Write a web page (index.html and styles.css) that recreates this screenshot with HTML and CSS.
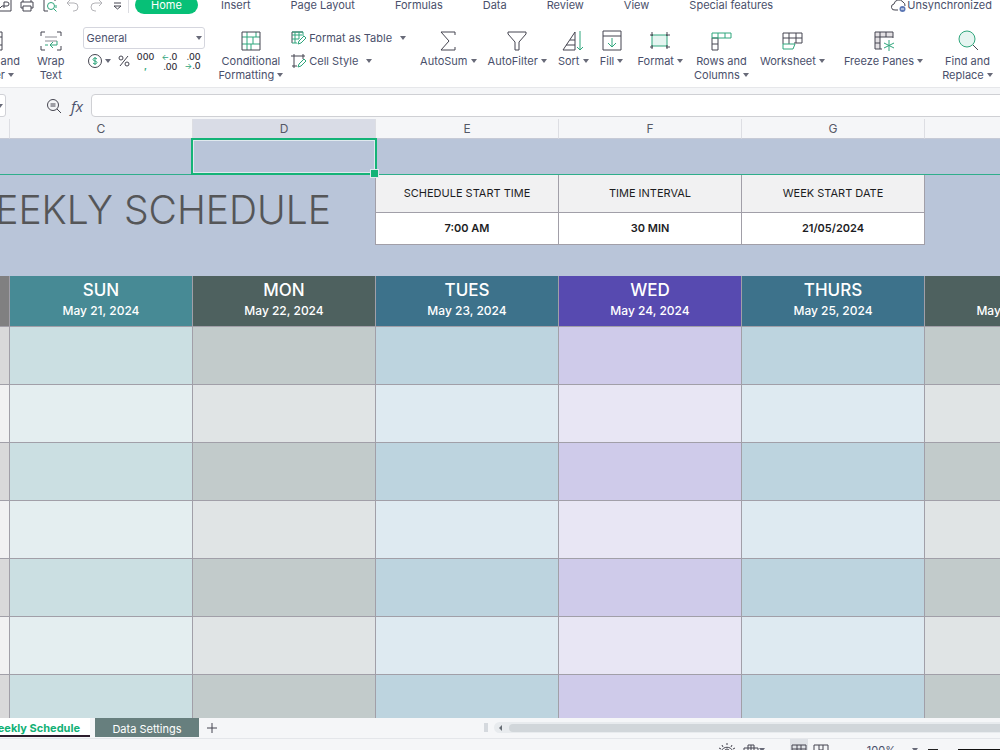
FILE: index.html
```html
<!DOCTYPE html>
<html lang="en">
<head>
  <meta charset="UTF-8">
  <title>Weekly Schedule</title>
  <link rel="stylesheet" href="styles.css">
</head>
<body>
  <div class="app">
    <header class="menubar">
      <div class="quick">
        <button aria-label="Export to PDF"><svg width="16" height="16" viewBox="0 0 16 16"><path d="M4 2h11v12H1V6" /><path d="M8 11V5h3a2 2 0 0 1 0 4H6M4 11l2-2"/></svg></button>
        <button aria-label="Print"><svg width="16" height="16" viewBox="0 0 16 16"><path d="M4 5V2h8v3M4 11H2V5h12v6h-2M4 9h8v5H4z"/></svg></button>
        <button aria-label="Print preview"><svg width="16" height="16" viewBox="0 0 16 16"><path d="M6 14H2V2h11v2"/><g class="green"><circle cx="9" cy="9" r="3.5"/><path d="M11.500 11.500l3 3M14 8v3"/></g></svg></button>
        <button aria-label="Undo" class="faded"><svg width="16" height="16" viewBox="0 0 16 16"><path d="M5 3L2 6l3 3M2 6h7a4 4 0 0 1 0 8H8"/></svg></button>
        <button aria-label="Redo" class="faded"><svg width="16" height="16" viewBox="0 0 16 16"><path d="M11 3l3 3-3 3M14 6H7a4 4 0 0 0 0 8h1"/></svg></button>
        <button aria-label="Customize"><svg width="16" height="16" viewBox="0 0 16 16"><path d="M3 6h7M3 9h7l-3.500 3z"/></svg></button>
      </div>
      <nav class="menus">
        <a href="#" class="menu-active">Home</a>
        <a href="#">Insert</a>
        <a href="#">Page Layout</a>
        <a href="#">Formulas</a>
        <a href="#">Data</a>
        <a href="#">Review</a>
        <a href="#">View</a>
        <a href="#">Special features</a>
      </nav>
      <button class="sync"><svg width="16" height="16" viewBox="0 0 16 16"><path d="M7 13H4a3 3 0 0 1-1-6 5 5 0 0 1 9-2 4 4 0 0 1 2 4"/><circle class="sync-dot" cx="11.500" cy="12" r="3"/><path class="sync-line" d="M10 12h3"/></svg>Unsynchronized</button>
    </header>

    <div class="ribbon">
      <button class="tool"><svg width="24" height="24" viewBox="0 0 24 24"><path d="M2 3h20v18H2zM2 8h20M12 3v5M2 16h20"/><path class="green" d="M5 12h14M16 10l3 2-3 2"/></svg><span>Merge and<br>Center <i class="arrow"></i></span></button>
      <button class="tool tool-wrap"><svg width="24" height="24" viewBox="0 0 24 24"><path d="M2 7V3h4M18 3h4v4M2 17v4h4M18 21h4v-4"/><path class="grey" d="M6 8h12M6 12h12"/><path class="green" d="M6 16h3M18 12v4h-6M14 13l-3 3 3 3"/></svg><span>Wrap<br>Text</span></button>

      <div class="number">
        <div class="select-wrap">
          <select aria-label="Number format"><option>General</option></select>
          <i class="arrow"></i>
        </div>
        <div class="number-tools">
          <button aria-label="Currency"><svg width="14" height="14" viewBox="0 0 14 14"><circle cx="7" cy="7" r="6.500"/><path class="green" d="M9 5c-1-1.500-4-1-4 .500C5 7.500 9 6.500 9 8.500c0 1.500-3 2-4 .500M7 3v8"/></svg><i class="arrow"></i></button>
          <button aria-label="Percent"><svg width="12" height="14" viewBox="0 0 12 14"><circle cx="3" cy="4" r="2"/><circle cx="9" cy="10" r="2"/><path d="M10 2L2 12"/></svg></button>
          <button class="digits">000<b>,</b></button>
          <button class="digits"><em>←</em>.0<br>.00</button>
          <button class="digits">.00<br><em>→</em>.0</button>
        </div>
      </div>

      <button class="tool tool-cond"><svg width="24" height="24" viewBox="0 0 24 24"><g class="green"><path d="M3 8h18M3 15h18M8 3v18M14 8v7M17 3v5M12 15v6"/></g><path d="M3 3v18M21 3v18M3 3h18M3 21h18"/></svg><span>Conditional<br>Formatting <i class="arrow"></i></span></button>

      <div class="styles">
        <button><svg width="16" height="16" viewBox="0 0 16 16"><path d="M1 13V2h11"/><path class="green" d="M1 2h11v4M1 13h5M1 5h10M1 9h7M4 2v11M8 2v7M7 14l1-3 5-5 2 2-5 5z"/></svg>Format as Table <i class="arrow"></i></button>
        <button><svg width="16" height="16" viewBox="0 0 16 16"><path d="M3 1v14M0 3h14M12 1v5M1 13h5"/><path class="green" d="M7 14l1-3 5-5 2 2-5 5z"/></svg>Cell Style <i class="arrow"></i></button>
      </div>

      <button class="tool"><svg width="24" height="24" viewBox="0 0 24 24"><path d="M19 6V3H5l8 9-8 9h14v-3"/></svg><span>AutoSum <i class="arrow"></i></span></button>
      <button class="tool"><svg width="24" height="24" viewBox="0 0 24 24"><path d="M3 3h18v2l-7 8v8h-4v-8L3 5z"/></svg><span>AutoFilter <i class="arrow"></i></span></button>
      <button class="tool"><svg width="24" height="24" viewBox="0 0 24 24"><path d="M2 21L14 3v18zM5 16h9M9 11h5"/><path class="green" d="M19 2v19M16 18l3 3 3-3"/></svg><span>Sort <i class="arrow"></i></span></button>
      <button class="tool tool-fill"><svg width="24" height="24" viewBox="0 0 24 24"><path d="M3 2h18v19H3zM3 7h18"/><path class="green" d="M12 9v9M8 14l4 4 4-4"/></svg><span>Fill <i class="arrow"></i></span></button>
      <button class="tool"><svg width="24" height="24" viewBox="0 0 24 24"><path class="green tint" d="M4 6h15v11H4z"/><path d="M2 6h3M4 3v4M18 6h4M19 3v4M2 18h3M4 16v4M18 18h4M19 16v4"/></svg><span>Format <i class="arrow"></i></span></button>
      <button class="tool"><svg width="24" height="24" viewBox="0 0 24 24"><path d="M3 9h6v12H3zM3 15h6"/><path class="green" d="M3 4h19v5H3zM9 4v5M16 4v5"/></svg><span>Rows and<br>Columns <i class="arrow"></i></span></button>
      <button class="tool tool-wide"><svg width="24" height="24" viewBox="0 0 24 24"><path d="M3 15V4h19v10h-8M9 4v11M16 4v10M3 9h19"/><path class="green" d="M3 15h12l-2 5H3z"/></svg><span>Worksheet <i class="arrow"></i></span></button>
      <button class="tool tool-wide"><svg width="24" height="24" viewBox="0 0 24 24"><path class="shade" d="M3 3h18v5H8v12H3z"/><path d="M21 9V3H3v17h7M3 8h18M8 3v17M14 3v5M3 14h5"/><path class="green" d="M17 11v11M12 14l10 5M12 19l10-5"/></svg><span>Freeze Panes <i class="arrow"></i></span></button>
      <button class="tool"><svg width="24" height="24" viewBox="0 0 24 24"><circle class="green tint" cx="11" cy="10" r="8"/><path d="M17 16l5 5"/></svg><span>Find and<br>Replace <i class="arrow"></i></span></button>
    </div>

    <div class="formula">
      <button class="namebox" aria-label="Cell names"><i class="arrow"></i></button>
      <button class="formula-icon" aria-label="Browse formula"><svg width="16" height="16" viewBox="0 0 16 16"><circle cx="7" cy="7" r="5.500"/><path d="M11 11l4 4M4.500 6h5M4.500 8h5"/></svg></button>
      <button class="fx" aria-label="Insert function">fx</button>
      <input type="text" aria-label="Formula">
    </div>

    <main class="sheet">
      <table>
        <colgroup><col class="col-b"><col><col><col><col><col><col></colgroup>
        <thead>
          <tr class="letters"><th></th><th>C</th><th class="current">D</th><th>E</th><th>F</th><th>G</th><th></th></tr>
        </thead>
        <tbody>
          <tr class="frozen"><td></td><td></td><td class="selected"></td><td></td><td></td><td></td><td></td></tr>
          <tr class="info-head">
            <td colspan="3" rowspan="2" class="title">WEEKLY SCHEDULE</td>
            <th>SCHEDULE START TIME</th><th>TIME INTERVAL</th><th>WEEK START DATE</th><td></td>
          </tr>
          <tr class="info"><td>7:00 AM</td><td>30 MIN</td><td>21/05/2024</td><td class="blank"></td></tr>
          <tr class="spacer"><td colspan="7"></td></tr>
          <tr class="days">
            <th></th>
            <th>SUN<small>May 21, 2024</small></th>
            <th>MON<small>May 22, 2024</small></th>
            <th>TUES<small>May 23, 2024</small></th>
            <th>WED<small>May 24, 2024</small></th>
            <th>THURS<small>May 25, 2024</small></th>
            <th>FRI<small>May 26, 2024</small></th>
          </tr>
          <tr class="slot"><td></td><td></td><td></td><td></td><td></td><td></td><td></td></tr>
          <tr class="slot even"><td></td><td></td><td></td><td></td><td></td><td></td><td></td></tr>
          <tr class="slot"><td></td><td></td><td></td><td></td><td></td><td></td><td></td></tr>
          <tr class="slot even"><td></td><td></td><td></td><td></td><td></td><td></td><td></td></tr>
          <tr class="slot"><td></td><td></td><td></td><td></td><td></td><td></td><td></td></tr>
          <tr class="slot even"><td></td><td></td><td></td><td></td><td></td><td></td><td></td></tr>
          <tr class="slot"><td></td><td></td><td></td><td></td><td></td><td></td><td></td></tr>
        </tbody>
      </table>
    </main>

    <div class="tabs">
      <button class="tab-active">Weekly Schedule</button>
      <button class="tab-settings">Data Settings</button>
      <button class="add" aria-label="Add sheet"><svg width="12" height="12" viewBox="0 0 12 12"><path d="M6 1v10M1 6h10"/></svg></button>
      <div class="scroll">
        <span class="grip"></span>
        <div class="track"><i class="arrow-left"></i><span class="thumb"></span></div>
      </div>
    </div>

    <footer class="status">
      <button aria-label="Eye protection"><svg width="16" height="16" viewBox="0 0 16 16"><path d="M2 9c3-5 9-5 12 0-3 4-9 4-12 0zM8 1v2M3 3l1 2M13 3l-1 2M0 6l2 1M16 6l-2 1"/><circle cx="8" cy="9" r="2"/></svg></button>
      <button class="status-read" aria-label="Reading layout"><svg width="16" height="16" viewBox="0 0 16 16"><path d="M1 6h14v6H1zM5 3h6v12H5zM8 3v12"/></svg><i class="arrow"></i></button>
      <button class="view-on" aria-label="Normal view"><svg width="16" height="16" viewBox="0 0 16 16"><path d="M1 3h14v11H1zM1 7h14M1 11h14M6 3v11M10 3v11"/></svg></button>
      <button aria-label="Page view"><svg width="16" height="16" viewBox="0 0 16 16"><path d="M1 3h14v11H1zM6 3v11M10 3v11M6 8h4"/></svg></button>
      <button class="zoom-value">100% <i class="arrow"></i></button>
      <button class="minus" aria-label="Zoom out"><span></span></button>
      <input type="range" aria-label="Zoom" value="100">
    </footer>
  </div>
</body>
</html>
```
FILE: styles.css
```css
* {
  box-sizing: border-box;
}
body {
  margin: 0;
  overflow: hidden;
  font-family: Inter, "Liberation Sans", sans-serif;
  font-size: 11px;
  line-height: 14px;
  color: #4a506b;
  background: #f5f6f8;
}
button {
  padding: 0;
  border: 0;
  background: none;
  font: inherit;
  color: inherit;
  white-space: nowrap;
}
svg {
  flex: none;
  fill: none;
  stroke: #454550;
  stroke-width: 1;
}
.green {
  stroke: #2fa67c;
}
.grey {
  stroke: #8b8b93;
}
.tint {
  fill: #e6f5f1;
}
.shade {
  fill: #e4e1e4;
  stroke: none;
}
.arrow {
  display: inline-block;
  flex: none;
  border: 3px solid transparent;
  border-top: 4px solid #686a78;
  border-bottom: 0;
  vertical-align: 2px;
}

/* the window sits partly outside the viewport on the left, top and bottom */
.app {
  display: flex;
  flex-direction: column;
  height: calc(100vh + 22px);
  margin: -12px 0 0 -60px;
}

/* menu bar */
.menubar {
  display: flex;
  align-items: center;
  height: 34px;
  padding: 0 8px 0 56px;
  background: #fff;
}
.quick {
  display: flex;
  gap: 7px;
  padding-right: 1px;
  border-right: 1px solid #dcdde2;
}
.quick button {
  height: 16px;
}
.faded {
  opacity: 0.4;
}
.menus {
  display: flex;
  align-items: center;
  gap: 40px;
  margin-left: 6px;
}
.menus a {
  color: inherit;
  text-decoration: none;
}
.menus .menu-active {
  width: 63px;
  margin-right: -17px;
  border-radius: 9px;
  background: #07c077;
  color: #fff;
  line-height: 18px;
  text-align: center;
}
.sync {
  display: flex;
  align-items: center;
  margin-left: auto;
}
.sync-dot {
  fill: #5d78b5;
  stroke: none;
}
.sync-line {
  stroke: #fff;
}

/* ribbon */
.ribbon {
  display: flex;
  align-items: flex-start;
  height: 66px;
  padding: 7px 10px 0 24px;
  border-bottom: 1px solid #e6e7ea;
  background: #fff;
}
.tool {
  display: flex;
  flex-direction: column;
  align-items: center;
  flex: none;
  gap: 1px;
  margin-right: 11px;
}
.tool-wrap {
  margin: 0 18px 0 6px;
}
.tool-cond {
  margin-right: 8px;
}
.tool-fill {
  margin-right: 14px;
}
.tool-wide {
  margin-right: 19px;
}
.number {
  flex: none;
  width: 122px;
  margin-right: 14px;
}
.select-wrap {
  display: flex;
  align-items: center;
  height: 22px;
  margin-top: -2px;
  padding-right: 2px;
  border: 1px solid #d5d6de;
  border-radius: 3px;
}
select {
  flex: 1;
  padding: 0 3px;
  border: 0;
  appearance: none;
  background: none;
  font: inherit;
  color: inherit;
}
.number-tools {
  display: flex;
  align-items: center;
  justify-content: space-between;
  height: 24px;
  padding: 0 4px 0 5px;
}
.number-tools button {
  display: flex;
  align-items: center;
  gap: 3px;
}
.number-tools .digits {
  display: block;
  font-size: 9px;
  font-weight: 500;
  line-height: 9px;
  text-align: right;
  color: #353540;
}
.digits b {
  display: block;
  line-height: 9px;
  text-align: center;
  color: #2fa67c;
}
.digits em {
  font-style: normal;
  font-size: 8px;
  color: #2fa67c;
}
.styles {
  display: flex;
  flex-direction: column;
  align-items: flex-start;
  flex: none;
  gap: 7px;
  margin: 1px 14px 0 0;
}
.styles button {
  display: flex;
  align-items: center;
  gap: 2px;
}
.styles .arrow {
  margin-left: 6px;
}

/* formula bar */
.formula {
  display: flex;
  align-items: center;
  height: 31px;
  padding: 4px 0 0 20px;
}
.namebox {
  width: 46px;
  height: 23px;
  padding-right: 2px;
  border: 1px solid #d0d1d6;
  border-radius: 3px;
  background: #fff;
  text-align: right;
}
.formula-icon {
  display: flex;
  margin-left: 40px;
}
.fx {
  margin: 0 8px 0 9px;
  font-family: "Open Sans", sans-serif;
  font-size: 15px;
  font-style: italic;
}
.formula input {
  flex: 1;
  height: 23px;
  margin-right: -4px;
  border: 1px solid #cfd0d4;
  border-radius: 4px;
  background: #fff;
}

/* sheet */
.sheet {
  flex: 1;
  min-height: 0;
  overflow: hidden;
  background: #b9c5d9;
}
table {
  width: 1168px;
  table-layout: fixed;
  border-spacing: 0;
  color: #1d1d1f;
}
col {
  width: 183px;
}
.col-b {
  width: 70px;
}
th, td {
  padding: 0;
  text-align: center;
  font-weight: 400;
}
.letters {
  height: 20px;
}
.letters th {
  border-right: 1px solid #dddee3;
  border-bottom: 1px solid #c6cad6;
  background: #f5f6f8;
  color: #555866;
  font-size: 12px;
}
.letters .current {
  background: #d9dce6;
}
.frozen {
  height: 36px;
}
.frozen td {
  border-bottom: 1px solid #2fae8b;
}
.selected {
  position: relative;
}
.selected::before {
  content: "";
  position: absolute;
  inset: -1px -1px -1px -2px;
  border: 2px solid #14b377;
  box-shadow: inset 0 0 0 1px #dfe9ee;
}
.selected::after {
  content: "";
  position: absolute;
  right: -3px;
  bottom: -4px;
  width: 7px;
  height: 7px;
  border: 1px solid #dfe9ee;
  background: #14b377;
}
.info-head {
  height: 38px;
}
.info-head th, .info td {
  padding-bottom: 2px;
  border-right: 1px solid #a19fa8;
  border-bottom: 1px solid #a19fa8;
}
.info-head th {
  background: #f1f1f2;
}
.title {
  padding-right: 44px;
  border-right: 1px solid #a19fa8;
  font-size: 39px;
  font-weight: 300;
  line-height: 46px;
  text-align: right;
  white-space: nowrap;
  color: #555658;
}
.info {
  height: 32px;
}
.info td {
  background: #fff;
  font-weight: 600;
}
.info .blank {
  border: 0;
  background: none;
}
.spacer {
  height: 31px;
}
.days {
  height: 51px;
}
.days th {
  padding-bottom: 2px;
  border-right: 1px solid #a19fa8;
  border-bottom: 1px solid #a19fa8;
  color: #fff;
  font-size: 17px;
  font-weight: 500;
  line-height: 22px;
}
.days small {
  display: block;
  font-size: 12px;
  line-height: 20px;
}
.days th:nth-child(1) { background: #808081; }
.days th:nth-child(2) { background: #478a95; }
.days th:nth-child(3) { background: #4e615f; }
.days th:nth-child(4) { background: #3d728b; }
.days th:nth-child(5) { background: #574ab0; }
.days th:nth-child(6) { background: #3d728b; }
.days th:nth-child(7) { background: #4e615f; }
.slot {
  height: 58px;
}
.slot td {
  border-right: 1px solid #a19fa8;
  border-bottom: 1px solid #a19fa8;
}
.slot td:nth-child(1) { background: #d9d9da; }
.slot td:nth-child(2) { background: #cbdfe2; }
.slot td:nth-child(3) { background: #c2cbcb; }
.slot td:nth-child(4) { background: #bdd4df; }
.slot td:nth-child(5) { background: #cfcbea; }
.slot td:nth-child(6) { background: #bdd4df; }
.slot td:nth-child(7) { background: #c2cbcb; }
.even td:nth-child(1) { background: #f1f1f2; }
.even td:nth-child(2) { background: #e4eef0; }
.even td:nth-child(3) { background: #e0e4e5; }
.even td:nth-child(4) { background: #deeaf1; }
.even td:nth-child(5) { background: #e8e6f4; }
.even td:nth-child(6) { background: #deeaf1; }
.even td:nth-child(7) { background: #e0e4e5; }

/* sheet tabs */
.tabs {
  display: flex;
  align-items: stretch;
  height: 21px;
  padding-bottom: 1px;
  border-bottom: 1px solid #e4e6ea;
}
.tab-active {
  width: 150px;
  padding: 3px 10px 0 0;
  border-bottom: 2px solid #2b1c2c;
  background: #fff;
  color: #12b176;
  font-weight: 700;
  text-align: right;
}
.tab-settings {
  width: 104px;
  margin-left: 5px;
  padding-top: 2px;
  background: #677f7e;
  color: #fff;
}
.add {
  display: flex;
  align-items: center;
  margin-left: 7px;
}
.scroll {
  display: flex;
  align-items: center;
  flex: 1;
  gap: 6px;
  margin-left: 266px;
}
.grip {
  width: 4px;
  height: 9px;
  background: #d5d9de;
}
.track {
  display: flex;
  align-items: center;
  flex: 1;
  gap: 7px;
  height: 11px;
  padding-left: 5px;
  border-radius: 6px 0 0 6px;
  background: #e8ebee;
}
.arrow-left {
  border: 3px solid transparent;
  border-right: 3px solid #666d74;
  border-left: 0;
}
.thumb {
  flex: 1;
  height: 8px;
  border-radius: 4px 0 0 4px;
  background: #d1d6da;
}

/* status bar */
.status {
  display: flex;
  align-items: center;
  justify-content: flex-end;
  height: 21px;
}
.status button {
  display: flex;
  align-items: center;
}
.status-read {
  margin: 0 25px 0 8px;
}
.view-on {
  margin-right: 5px;
  padding: 3px 1px;
  background: #dfe2e7;
}
.zoom-value {
  gap: 16px;
  margin-left: 36px;
}
.status .zoom-value {
  margin-left: 38px;
}
.minus {
  width: 10px;
  height: 10px;
  margin: 0 20px 0 10px;
}
.minus span {
  width: 10px;
  height: 2px;
  background: #222;
}
.status input {
  width: 42px;
  height: 2px;
  margin: 0;
  appearance: none;
  background: #111;
}
.status input::-webkit-slider-thumb {
  appearance: none;
}
```
